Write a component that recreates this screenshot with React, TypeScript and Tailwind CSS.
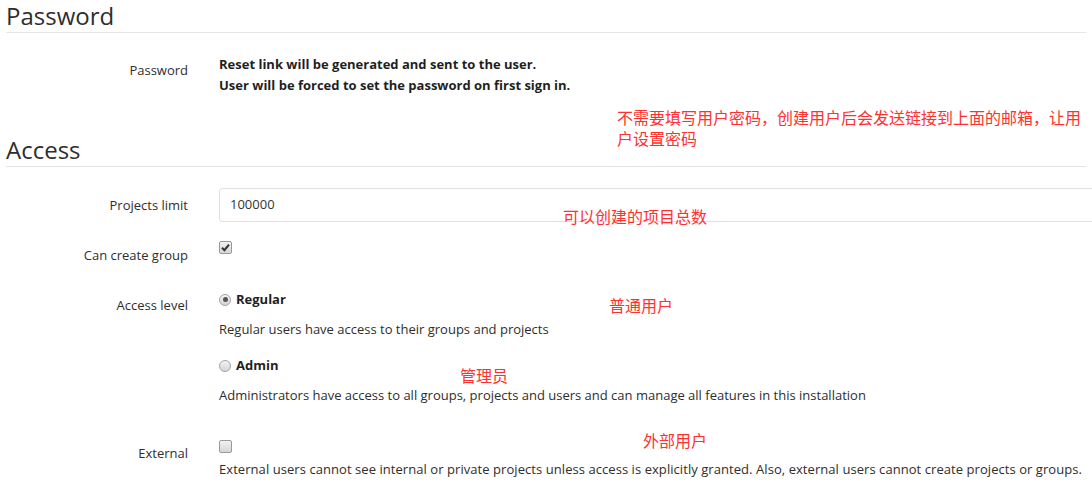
import React from "react";

function CheckBox({ checked }: { checked?: boolean }) {
  return (
    <span className="relative block w-[13px] h-[13px] rounded-[2px] border border-[#9a9a9a] bg-gradient-to-b from-[#f2f2f2] to-[#d6d6d6]">
      {checked && (
        <svg viewBox="0 0 13 13" className="absolute left-[-1px] top-[-1px] w-[13px] h-[13px]">
          <path d="M3 6.8 L5.4 9.2 L10 3.6" fill="none" stroke="#333" strokeWidth="2" />
        </svg>
      )}
    </span>
  );
}

function Radio({ checked }: { checked?: boolean }) {
  return (
    <span className="flex items-center justify-center w-[12px] h-[12px] rounded-full border border-[#a3a3a3] bg-gradient-to-b from-[#f4f4f4] to-[#d4d4d4]">
      {checked && <span className="block w-[5px] h-[5px] rounded-full bg-[#555]" />}
    </span>
  );
}

function Row({ label, labelClass, children, className }: { label: string; labelClass: string; children: React.ReactNode; className?: string }) {
  return (
    <div className={`flex ${className ?? ""}`}>
      <div className={`w-[188px] shrink-0 text-right leading-[21px] ${labelClass}`}>{label}</div>
      <div className="ml-[31px] flex-1">{children}</div>
    </div>
  );
}

export default function App() {
  const red = "absolute text-[16px] leading-[21px] text-[#ff3030] font-['Noto_Sans_CJK_SC',sans-serif]";

  return (
    <div className="relative w-[1092px] h-[488px] overflow-hidden bg-white text-[13px] text-[#2e2e2e] font-['Open_Sans','Noto_Sans',sans-serif]">
      <div className="px-[6px]">
        <h3 className="h-[33px] border-b border-[#e5e5e5] text-[24px] leading-[32px] font-normal">Password</h3>
      </div>

      {/* password */}
      <Row label="Password" labelClass="pt-[6px]" className="mt-[21px]">
        <div className="font-bold text-[#1f1f1f] leading-[21px]">
          <div>Reset link will be generated and sent to the user.</div>
          <div>User will be forced to set the password on first sign in.</div>
        </div>
      </Row>

      <div className="px-[6px] mt-[38px]">
        <h3 className="h-[33px] border-b border-[#e5e5e5] text-[24px] leading-[32px] font-normal">Access</h3>
      </div>

      {/* projects limit */}
      <div className="flex items-center mt-[21px]">
        <div className="w-[188px] shrink-0 text-right leading-[21px]">Projects limit</div>
        <div className="ml-[31px] shrink-0 w-[900px] h-[34px] border border-[#e0e0e0] rounded-[3px] flex items-center px-[10px] text-[#333]">
          100000
        </div>
      </div>

      {/* can create group */}
      <Row label="Can create group" labelClass="pt-[11px]" className="mt-[12px]">
        <div className="pt-[7px]">
          <CheckBox checked />
        </div>
      </Row>

      {/* access level */}
      <Row label="Access level" labelClass="pt-[6px]" className="mt-[23px]">
        <div className="leading-[21px]">
          <div className="flex items-center gap-[5px]">
            <Radio checked />
            <span className="font-bold text-[#1f1f1f]">Regular</span>
          </div>
          <div className="mt-[9px]">Regular users have access to their groups and projects</div>
          <div className="flex items-center gap-[5px] mt-[15px]">
            <Radio />
            <span className="font-bold text-[#1f1f1f]">Admin</span>
          </div>
          <div className="mt-[9px]">Administrators have access to all groups, projects and users and can manage all features in this installation</div>
        </div>
      </Row>

      {/* external */}
      <Row label="External" labelClass="pt-[10px]" className="mt-[27px]">
        <div className="pt-[7px]">
          <CheckBox />
          <div className="mt-[6px] leading-[21px] whitespace-nowrap tracking-[0.06px]">
            External users cannot see internal or private projects unless access is explicitly granted. Also, external users cannot create projects or groups.
          </div>
        </div>
      </Row>

      {/* annotations */}
      <div className={`${red} left-[617px] top-[107px] w-[472px]`}>
        不需要填写用户密码，创建用户后会发送链接到上面的邮箱，让用户设置密码
      </div>
      <div className={`${red} left-[563px] top-[206px]`}>可以创建的项目总数</div>
      <div className={`${red} left-[609px] top-[295px]`}>普通用户</div>
      <div className={`${red} left-[460px] top-[365px]`}>管理员</div>
      <div className={`${red} left-[643px] top-[430px]`}>外部用户</div>
    </div>
  );
}
